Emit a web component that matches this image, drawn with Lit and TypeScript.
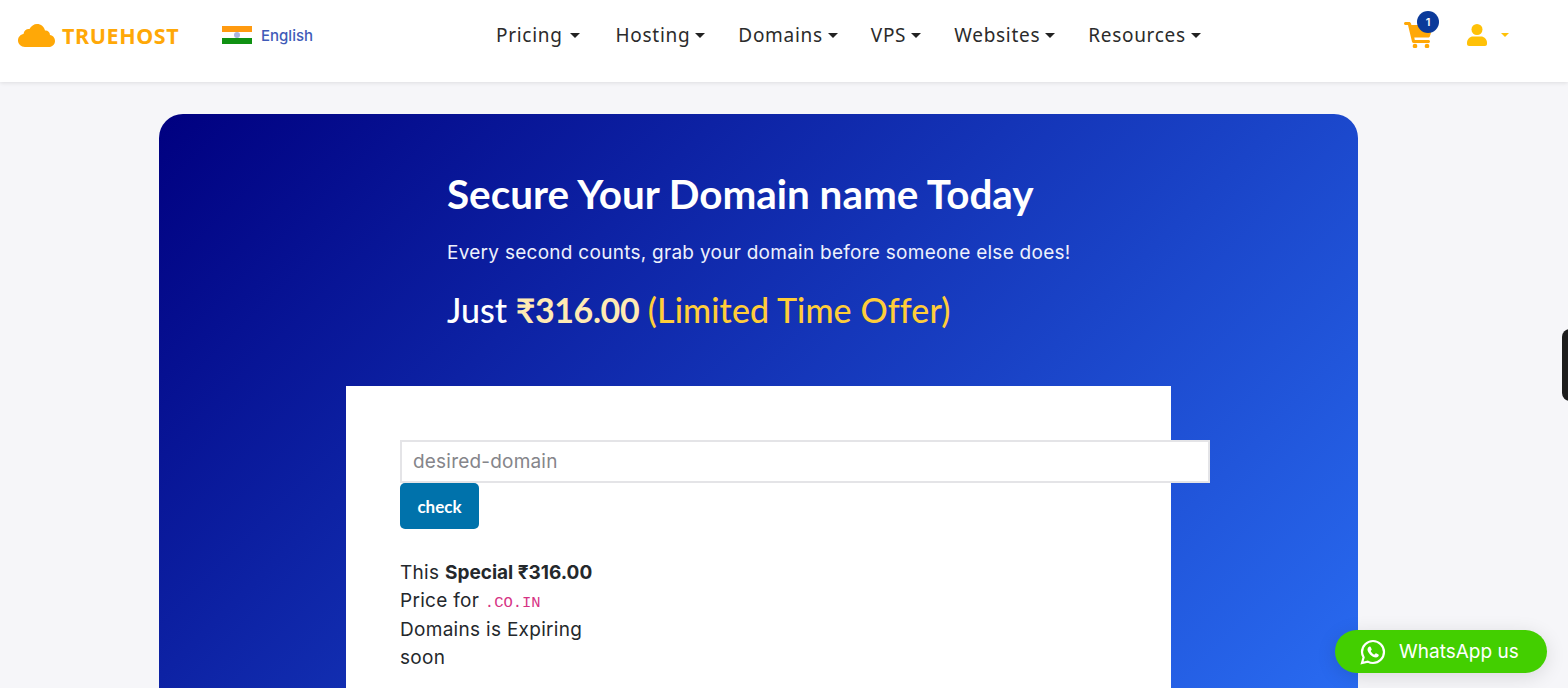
import { LitElement, css, html } from "lit";
import { customElement } from "lit/decorators.js";

const NAV_ITEMS = [
  { label: "Pricing", wide: true },
  { label: "Hosting", wide: false },
  { label: "Domains", wide: false },
  { label: "VPS", wide: false },
  { label: "Websites", wide: false },
  { label: "Resources", wide: false },
];

@customElement("app-root")
export class AppRoot extends LitElement {
  static styles = css`
    :host {
      display: block;
      height: 688px;
      overflow: hidden;
      position: relative;
      background: #f6f6f9;
      font-family: Inter, "Liberation Sans", sans-serif;
      color: #212529;
    }
    header {
      height: 82px;
      box-sizing: border-box;
      background: #fff;
      box-shadow: 0 1px 4px rgba(0, 0, 0, 0.1);
      display: flex;
      align-items: center;
      padding: 0 0 12px 18px;
      position: relative;
    }
    .logo {
      display: flex;
      align-items: center;
      gap: 7px;
      width: 204px;
      color: #ffa807;
      font: 700 21.500px "Noto Sans", sans-serif;
      letter-spacing: 0.6px;
    }
    .lang {
      display: flex;
      align-items: center;
      gap: 9px;
      width: 274px;
      color: #3f5bb8;
      font: 500 15px Inter, sans-serif;
    }
    nav {
      display: flex;
      gap: 33px;
      font: 400 19px "Noto Sans", sans-serif;
      letter-spacing: 0.7px;
      color: #2b2b2b;
    }
    .nav-item {
      display: flex;
      align-items: center;
      gap: 5px;
    }
    .nav-item.wide {
      gap: 7px;
      margin-right: 3px;
    }
    .caret {
      width: 0;
      height: 0;
      border-left: 5px solid transparent;
      border-right: 5px solid transparent;
      border-top: 5px solid #222;
    }
    .actions {
      margin-left: auto;
      display: flex;
      align-items: center;
      padding-right: 59px;
    }
    .cart {
      position: relative;
      display: flex;
      margin-right: 34px;
    }
    .badge {
      position: absolute;
      top: -11px;
      right: -6px;
      width: 22px;
      height: 22px;
      border-radius: 50%;
      background: #0b3a9a;
      color: #fff;
      font: 600 11px Inter, sans-serif;
      display: flex;
      align-items: center;
      justify-content: center;
    }
    .user {
      display: flex;
      align-items: center;
      gap: 14px;
    }
    .user .caret {
      border-top-color: #ffc107;
      border-left-width: 4px;
      border-right-width: 4px;
      border-top-width: 4px;
    }
    main {
      padding: 32px 210px 0 159px;
    }
    .hero {
      height: 790px;
      border-radius: 24px;
      background: linear-gradient(135deg, #000080 0%, #2e78ff 100%);
      padding-top: 57px;
      box-sizing: border-box;
    }
    .intro {
      margin-left: 288px;
      color: #fff;
    }
    h1 {
      margin: 0;
      font: 700 40.400px/46px Lato, sans-serif;
    }
    .sub {
      margin: 22px 0 0;
      font: 400 19px/28px Inter, sans-serif;
      letter-spacing: 0.27px;
      color: #eef1fc;
    }
    .price {
      margin: 22px 0 0;
      font: 500 34px/42px Lato, sans-serif;
    }
    .price b {
      font-weight: 700;
      letter-spacing: -0.4px;
      color: #ffeab3;
    }
    .price span {
      letter-spacing: 0.1px;
      color: #ffcd39;
    }
    .panel {
      margin: 55px 0 0 187px;
      width: 825px;
      height: 420px;
      box-sizing: border-box;
      background: #fff;
      padding: 54px;
    }
    input {
      display: block;
      width: 810px;
      height: 43px;
      box-sizing: border-box;
      border: 2px solid #e4e4e7;
      padding: 0 11px;
      font: 400 19px Inter, sans-serif;
      letter-spacing: 0.2px;
      background: #fff;
      outline: none;
    }
    input::placeholder {
      color: #85858a;
    }
    button {
      display: block;
      width: 79px;
      height: 46px;
      border: none;
      border-radius: 5px;
      background: #0072ab;
      color: #fff;
      font: 700 17px Lato, sans-serif;
    }
    .note {
      width: 200px;
      margin: 30px 0 0;
      font: 400 19px/28.400px Inter, sans-serif;
      letter-spacing: 0.3px;
      color: #24282c;
    }
    .note strong {
      letter-spacing: 0;
    }
    code {
      font: 400 15.500px "Liberation Mono", monospace;
      letter-spacing: 0;
      color: #d63384;
    }
    .edge {
      position: absolute;
      right: -10px;
      top: 329px;
      width: 16px;
      height: 72px;
      border-radius: 10px;
      background: #1d1d1d;
    }
    .whatsapp {
      position: absolute;
      left: 1335px;
      top: 630px;
      width: 212px;
      height: 43px;
      border-radius: 22px;
      background: #43cf00;
      box-shadow: 0 4px 20px rgba(0, 0, 0, 0.12);
      color: #fff;
      font: 400 19px Inter, sans-serif;
      display: flex;
      align-items: center;
      gap: 13px;
      padding-left: 25px;
      box-sizing: border-box;
    }
  `;

  render() {
    return html`
      <header>
        <div class="logo">
          <svg width="37" height="23" viewBox="0 0 37 23">
            <path
              fill="#ffa807"
              d="M7 23C3 23 0 20 0 16.500C0 13 2.500 10.500 5.500 10C6 6 9 4.500 11.500 5C13 2 16 0 19 0C23 0 26 2.500 27 6.500C29 6 32 7.500 32 11C35 11.500 37 14 37 17C37 20.500 34 23 31 23Z"
            />
          </svg>
          TRUEHOST
        </div>
        <div class="lang">
          <svg width="30" height="18" viewBox="0 0 30 18">
            <rect width="30" height="6" fill="#ff9a10" />
            <rect y="6" width="30" height="6" fill="#fff" />
            <rect y="12" width="30" height="6" fill="#0f9112" />
            <circle cx="15" cy="9" r="3" fill="#aab5e0" />
          </svg>
          English
        </div>
        <nav>
          ${NAV_ITEMS.map(
            (item) => html`<div class="nav-item ${item.wide ? "wide" : ""}">
              ${item.label}<i class="caret"></i>
            </div>`
          )}
        </nav>
        <div class="actions">
          <div class="cart">
            <svg width="29" height="26" viewBox="0 0 29 26">
              <path
                fill="#ffa807"
                d="M0 1.500C0 .7.700 0 1.500 0H5C6 0 6.700.7 7 1.500L7.400 3H27C28.300 3 29 4.200 28.700 5.300L26 14C25.700 15 25 15.500 24 15.500H10.300L10.800 18H24.500C25.300 18 26 18.700 26 19.500S25.300 21 24.500 21H9.500C8.700 21 8.100 20.500 8 19.800L4 3H1.500C.7 3 0 2.300 0 1.500Z"
              />
              <circle cx="11" cy="24" r="2.300" fill="#ffa807" />
              <circle cx="23" cy="24" r="2.300" fill="#ffa807" />
            </svg>
            <span class="badge">1</span>
          </div>
          <div class="user">
            <svg width="20" height="22" viewBox="0 0 20 22">
              <circle cx="10" cy="5.500" r="5.500" fill="#ffc107" />
              <path
                fill="#ffc107"
                d="M0 19C0 15 3 12.500 6 12.500H14C17 12.500 20 15 20 19V20C20 21.200 19 22 18 22H2C1 22 0 21.200 0 20Z"
              />
            </svg>
            <i class="caret"></i>
          </div>
        </div>
      </header>
      <main>
        <section class="hero">
          <div class="intro">
            <h1>Secure Your Domain name Today</h1>
            <p class="sub">Every second counts, grab your domain before someone else does!</p>
            <p class="price">Just <b>₹316.00</b> <span>(Limited Time Offer)</span></p>
          </div>
          <div class="panel">
            <input placeholder="desired-domain" />
            <button>check</button>
            <p class="note">
              This <strong>Special ₹316.00</strong> Price for <code>.CO.IN</code> Domains is Expiring soon
            </p>
          </div>
        </section>
      </main>
      <div class="edge"></div>
      <div class="whatsapp">
        <svg width="26" height="26" viewBox="0 0 26 26">
          <path
            fill="none"
            stroke="#fff"
            stroke-width="2.200"
            d="M2 24L3.600 18.300C2.500 16.500 2 14.800 2 13C2 7 7 2 13 2S24 7 24 13S19 24 13 24C11.200 24 9.400 23.500 7.800 22.600Z"
          />
          <path
            fill="#fff"
            d="M9.500 7.500C8.500 7.800 7.500 9 7.500 10.500C7.500 13.500 12 18.500 16 18.500C17.500 18.500 18.800 17.300 18.800 16C18.800 15.500 16.300 14.200 15.800 14.300C15.300 14.500 15 15.500 14.500 15.600C13.500 15.700 10.800 13 10.800 12C10.900 11.400 11.700 11.200 11.700 10.600C11.700 10.100 10.500 7.500 10.200 7.500Z"
          />
        </svg>
        WhatsApp us
      </div>
    `;
  }
}
